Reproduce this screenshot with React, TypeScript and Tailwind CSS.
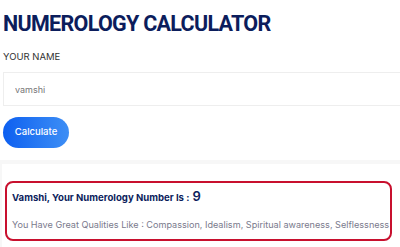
import React, { useState } from "react";

const App: React.FC = () => {
    const [name, setName] = useState("vamshi")

    return (
        <div className="min-h-[247px] w-[400px] bg-white font-['Roboto',sans-serif]">
            <div className="px-[3px] pt-[12px]">
                <h1 className="text-[21.5px] font-bold leading-[24px] tracking-[-0.7px] text-[#0c1d5c]">
                    NUMEROLOGY CALCULATOR
                </h1>
                <label htmlFor="yourName" className="mt-[15px] block font-['Inter',sans-serif] text-[9.5px] leading-[12px] text-[#333]">
                    YOUR NAME
                </label>
                <input
                    id="yourName"
                    type="text"
                    value={name}
                    onChange={(e) => setName(e.target.value)}
                    className="mt-[9px] block h-[34px] w-[398px] border border-[#eeeeee] bg-white px-[11px] font-['Inter',sans-serif] text-[9px] text-[#777] outline-none"
                />
                <button
                    type="button"
                    className="mt-[11px] h-[31px] w-[66px] rounded-full bg-gradient-to-r from-[#0d5ff0] to-[#3d8ef5] font-['Inter',sans-serif] text-[9.5px] font-medium text-white"
                >
                    Calculate
                </button>
            </div>
            <div className="mt-[12px] bg-[#f7f7f7] pt-[4px] pl-[2px]">
                <div className="bg-white pt-[17px] pb-[6px] pl-[3px] pr-[8px] font-['Inter',sans-serif]">
                    <div className="h-[60px] rounded-[8px] border-[2px] border-[#c8102e] px-[5px] pt-[4px]">
                        <div className="flex items-baseline text-[9.6px] font-bold text-[#0c1d5c]">
                            <span>Vamshi, Your Numerology Number Is :</span>
                            <span className="ml-[3px] text-[13px] font-semibold">9</span>
                        </div>
                        <p className="mt-[11px] whitespace-nowrap text-[9.1px] text-[#7a7a8c]">
                            You Have Great Qualities Like : Compassion, Idealism, Spiritual awareness, Selflessness
                        </p>
                    </div>
                </div>
            </div>
        </div>
    )
}

export default App
